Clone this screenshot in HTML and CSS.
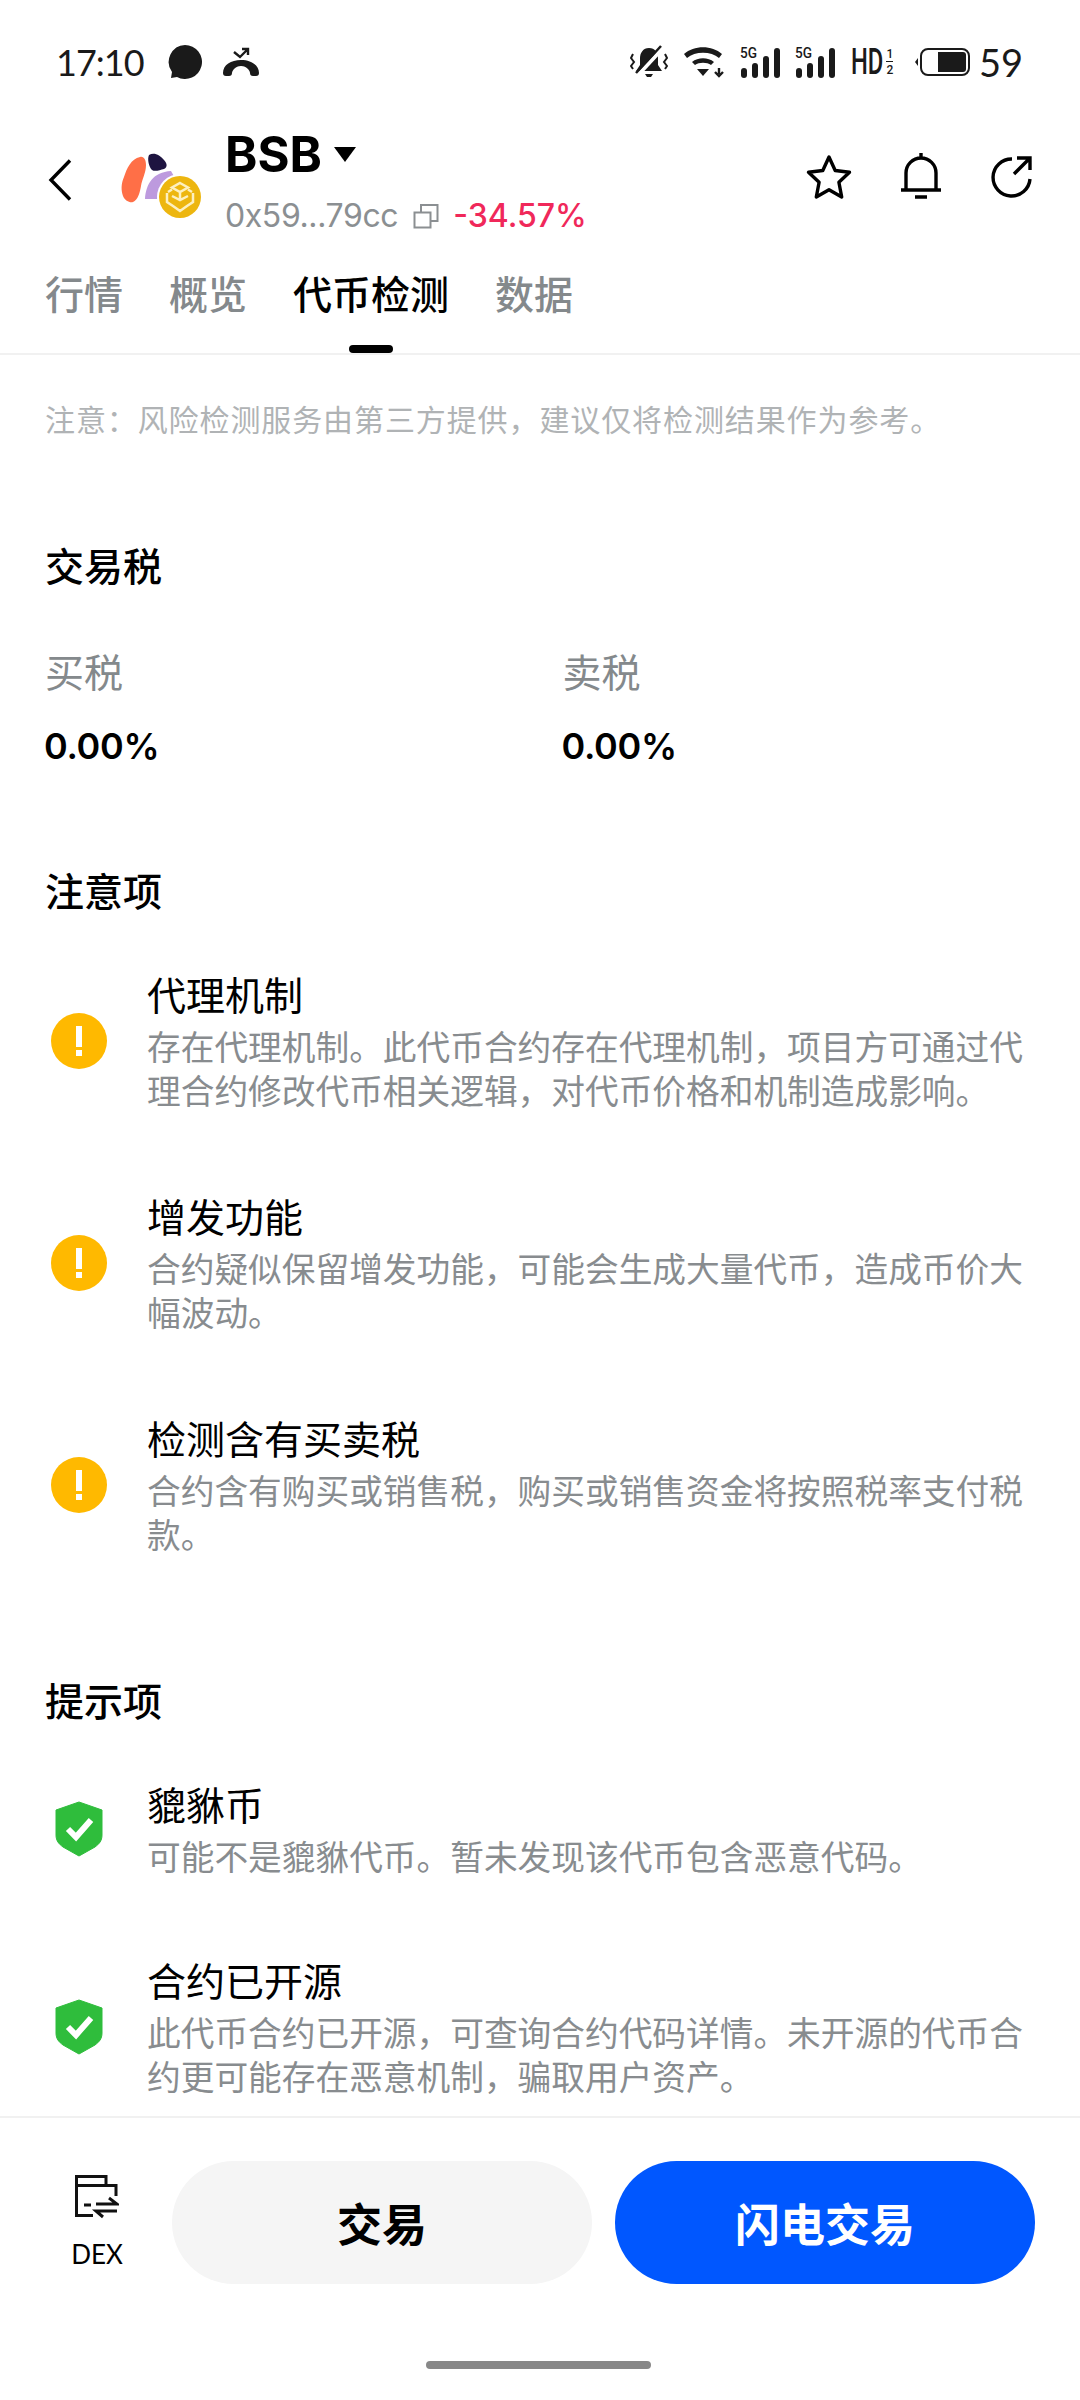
FILE: index.html
```html
<!DOCTYPE html>
<html lang="zh-CN">
<head>
    <meta charset="UTF-8">
    <meta name="viewport" content="width=device-width, initial-scale=1.0">
    <title>代币检测</title>
    <link rel="stylesheet" href="styles.css">
</head>
<body>
<div class="page">
    <div class="status">
        <span class="time">17:10</span>
        <svg class="st-bubble" width="36" height="36" viewBox="0 0 36 36"><path d="M18 1a17 17 0 1 1-8 32l-6 1 1-6A17 17 0 0 1 18 1z" fill="#1a1a1a"/></svg>
        <svg class="st-call" width="38" height="30" viewBox="0 0 38 30"><path d="M1 26c0-8 8-13 18-13s18 5 18 13c0 2-1 3-3 3h-3c-2 0-3-1-3-3 0-1-1-3-2-4-2-2-4-3-7-3s-5 1-7 3c-1 1-2 3-2 4 0 2-1 3-3 3H4c-2 0-3-1-3-3z" fill="#1a1a1a"/><path d="M12 5l6 5 8-8M20 2h6v6" fill="none" stroke="#1a1a1a" stroke-width="2.400"/></svg>
        <div class="status-right">
            <svg class="st-mute" width="38" height="34" viewBox="0 0 38 34"><path d="M19 3c-6 0-9 5-9 10v7l-4 6h26l-4-6v-7c0-5-3-10-9-10z" fill="#1a1a1a"/><path d="M15 29h8l-2 3h-4z" fill="#1a1a1a"/><path d="M9 29L33 3" stroke="#fff" stroke-width="4"/><path d="M6 28L31 1" stroke="#1a1a1a" stroke-width="2.500"/><path d="M3 9L1 13l3 4-3 4 2 3M35 9l2 4-3 4 3 4-2 3" fill="none" stroke="#1a1a1a" stroke-width="2"/></svg>
            <svg class="st-wifi" width="42" height="32" viewBox="0 0 42 32"><path d="M1 8c10-9 28-9 38 0l-3 4c-8-7-24-7-32 0z" fill="#1a1a1a"/><path d="M9 16c6-5 16-5 22 0l-3 3c-4-3-12-3-16 0z" fill="#1a1a1a"/><path d="M14 23h12l-6 7z" fill="#1a1a1a"/><path d="M36 22v6M32 26l4 4 4-4" fill="none" stroke="#1a1a1a" stroke-width="2.400"/></svg>
            <svg class="st-sig" width="40" height="32" viewBox="0 0 40 32"><text class="st-5g" x="0" y="12" textLength="17" lengthAdjust="spacingAndGlyphs">5G</text><rect x="1" y="22" width="6" height="10" rx="3" fill="#1a1a1a"/><rect x="12" y="17" width="6" height="15" rx="3" fill="#1a1a1a"/><rect x="23" y="10" width="6" height="22" rx="3" fill="#1a1a1a"/><rect x="34" y="2" width="6" height="30" rx="3" fill="#1a1a1a"/></svg>
            <svg class="st-sig" width="40" height="32" viewBox="0 0 40 32"><text class="st-5g" x="0" y="12" textLength="17" lengthAdjust="spacingAndGlyphs">5G</text><rect x="1" y="22" width="6" height="10" rx="3" fill="#1a1a1a"/><rect x="12" y="17" width="6" height="15" rx="3" fill="#1a1a1a"/><rect x="23" y="10" width="6" height="22" rx="3" fill="#1a1a1a"/><rect x="34" y="2" width="6" height="30" rx="3" fill="#1a1a1a"/></svg>
            <div class="st-hd">
                <span class="hd-txt">HD</span>
                <span class="hd-frac"><span class="hd-num">1</span><span class="hd-num">2</span></span>
            </div>
            <svg class="st-batt" width="56" height="28" viewBox="0 0 56 28"><path d="M3 10l-3 4 3 4z" fill="#1a1a1a"/><rect x="6" y="1" width="48" height="26" rx="7" fill="none" stroke="#1a1a1a" stroke-width="2"/><path d="M23 4h25a3 3 0 0 1 3 3v14a3 3 0 0 1-3 3H23z" fill="#1a1a1a"/></svg>
            <span class="batt-num">59</span>
        </div>
    </div>

    <div class="header">
        <svg class="back" width="24" height="42" viewBox="0 0 24 42"><path d="M22 1.500L3 21l19 19.500" fill="none" stroke="#000" stroke-width="3.400"/></svg>
        <svg class="logo" width="82" height="70" viewBox="0 0 82 70">
            <path d="M19 7c4-1 6 3 6 8 0 8-4 14-5 21-1 6-3 14-8 16-3 1-8-1-10-6C0 40 0 34 3 27 6 18 10 9 19 7z" fill="#ff6f47"/>
            <path d="M28 5c5-3 11 0 15 5 3 3 4 7 0 9-4 1-9 3-12 1-3-3-5-11-3-15z" fill="#1e1440"/>
            <path d="M24 49C25 34 32 22 50 21l4 7-8 7-10 14z" fill="#bd9ade"/>
            <circle cx="59" cy="47" r="23" fill="#fff"/>
            <circle cx="59" cy="47" r="21" fill="#edb60f"/>
            <path d="M59 33l8 4.500-8 4.500-8-4.500zM47 42l4-2.500M71 42l-4-2.500M46 43v9l6 4M72 43v9l-6 4M59 42v7M51 46l8 4 8-4M52 56l7 5 7-5" fill="none" stroke="#fdf0c0" stroke-width="2.500"/>
        </svg>
        <div class="token">
            <div class="token-name">BSB <svg class="caret" width="22" height="15" viewBox="0 0 22 15"><path d="M0 0h22L11 15z" fill="#000"/></svg></div>
            <div class="token-sub">
                <span class="addr">0x59...79cc</span>
                <svg class="copy" width="26" height="26" viewBox="0 0 26 26"><path d="M1.500 9.500h16v15h-16z M8 9V2h16.500v16H18" fill="none" stroke="#8b8f92" stroke-width="2"/></svg>
                <span class="pct">-34.57%</span>
            </div>
        </div>
        <div class="header-icons">
            <svg width="46" height="46" viewBox="0 0 46 46"><path d="M23 3l6.200 13.500 14.300 1.700-10.600 10 2.800 14.800L23 35.700 10.300 43l2.800-14.800-10.600-10 14.300-1.700z" fill="none" stroke="#000" stroke-width="3.400" stroke-linejoin="round"/></svg>
            <svg width="40" height="48" viewBox="0 0 40 48"><path d="M20 0v5M5 36V20a15 15 0 0 1 30 0v16M0 37h40M14 44h12" fill="none" stroke="#000" stroke-width="3.400"/></svg>
            <svg width="42" height="44" viewBox="0 0 42 44"><path d="M22 4A18.500 18.500 0 1 0 40 24" fill="none" stroke="#000" stroke-width="3.400"/><path d="M24 19L39 4M27 3h13v12" fill="none" stroke="#000" stroke-width="3.400"/></svg>
        </div>
    </div>

    <div class="tabs">
        <span class="tab">行情</span>
        <span class="tab">概览</span>
        <span class="tab active">代币检测</span>
        <span class="tab">数据</span>
    </div>

    <div class="content">
        <p class="notice">注意：风险检测服务由第三方提供，建议仅将检测结果作为参考。</p>

        <h2 class="sec-title">交易税</h2>
        <div class="tax-row">
            <div class="tax-col">
                <div class="tax-label">买税</div>
                <div class="tax-val">0.00%</div>
            </div>
            <div class="tax-col">
                <div class="tax-label">卖税</div>
                <div class="tax-val">0.00%</div>
            </div>
        </div>

        <h2 class="sec-title">注意项</h2>
        <div class="item warn">
            <svg class="item-icon" width="56" height="56" viewBox="0 0 56 56"><circle cx="28" cy="28" r="28" fill="#ffb900"/><path d="M25 13h6v21h-6zM25 37h6v6h-6z" fill="#fff"/></svg>
            <div class="item-text">
                <div class="item-title">代理机制</div>
                <div class="item-desc">存在代理机制。此代币合约存在代理机制，项目方可通过代理合约修改代币相关逻辑，对代币价格和机制造成影响。</div>
            </div>
        </div>
        <div class="item warn">
            <svg class="item-icon" width="56" height="56" viewBox="0 0 56 56"><circle cx="28" cy="28" r="28" fill="#ffb900"/><path d="M25 13h6v21h-6zM25 37h6v6h-6z" fill="#fff"/></svg>
            <div class="item-text">
                <div class="item-title">增发功能</div>
                <div class="item-desc">合约疑似保留增发功能，可能会生成大量代币，造成币价大幅波动。</div>
            </div>
        </div>
        <div class="item warn">
            <svg class="item-icon" width="56" height="56" viewBox="0 0 56 56"><circle cx="28" cy="28" r="28" fill="#ffb900"/><path d="M25 13h6v21h-6zM25 37h6v6h-6z" fill="#fff"/></svg>
            <div class="item-text">
                <div class="item-title">检测含有买卖税</div>
                <div class="item-desc">合约含有购买或销售税，购买或销售资金将按照税率支付税款。</div>
            </div>
        </div>

        <h2 class="sec-title tips">提示项</h2>
        <div class="item ok">
            <svg class="item-icon" width="50" height="56" viewBox="0 0 50 56"><path d="M25 1l23 8v25c0 6-3 9-7 12L25 55 9 46c-4-3-7-6-7-12V9z" fill="#2fbd3c" stroke="#2fbd3c" stroke-linejoin="round"/><path d="M14 28l8 8 15-17" fill="none" stroke="#fff" stroke-width="6"/></svg>
            <div class="item-text">
                <div class="item-title">貔貅币</div>
                <div class="item-desc">可能不是貔貅代币。暂未发现该代币包含恶意代码。</div>
            </div>
        </div>
        <div class="item ok">
            <svg class="item-icon" width="50" height="56" viewBox="0 0 50 56"><path d="M25 1l23 8v25c0 6-3 9-7 12L25 55 9 46c-4-3-7-6-7-12V9z" fill="#2fbd3c" stroke="#2fbd3c" stroke-linejoin="round"/><path d="M14 28l8 8 15-17" fill="none" stroke="#fff" stroke-width="6"/></svg>
            <div class="item-text">
                <div class="item-title">合约已开源</div>
                <div class="item-desc">此代币合约已开源，可查询合约代码详情。未开源的代币合约更可能存在恶意机制，骗取用户资产。</div>
            </div>
        </div>
    </div>

    <div class="footer">
        <div class="footer-row">
            <div class="dex">
                <svg width="44" height="44" viewBox="0 0 44 44"><path d="M18 40.500H1.500V1.500H31v9h10V21M1.500 10.500H31M9 30h7" fill="none" stroke="#111" stroke-width="3"/><path d="M21 29h21l-8-6M42 36H21l7 6" fill="none" stroke="#111" stroke-width="3"/></svg>
                <span class="dex-label">DEX</span>
            </div>
            <button class="btn btn-trade">交易</button>
            <button class="btn btn-flash">闪电交易</button>
        </div>
        <div class="home-bar"></div>
    </div>
</div>
</body>
</html>
```

FILE: styles.css
```css
* {
    box-sizing: border-box;
    margin: 0;
    padding: 0;
}
body {
    font-family: 'Inter', 'Noto Sans CJK SC', sans-serif;
    background-color: #fff;
    color: #000;
}
.page {
    width: 1080px;
    height: 2400px;
    display: flex;
    flex-direction: column;
    overflow: hidden;
}

/* status bar */
.status {
    height: 124px;
    flex: none;
    display: flex;
    align-items: center;
    padding: 0 57px 0 56px;
    color: #1a1a1a;
}
.time {
    font-family: 'Lato', sans-serif;
    font-size: 36px;
    letter-spacing: -1px;
    width: 111px;
}
.st-call {
    margin-left: 19px;
}
.status-right {
    margin-left: auto;
    display: flex;
    align-items: center;
}
.st-wifi {
    margin-left: 15px;
}
.st-sig {
    margin-left: 15px;
}
.st-hd {
    margin-left: 16px;
    width: 46px;
    display: flex;
    align-items: center;
}
.hd-txt {
    width: 34px;
    font-family: 'Roboto', sans-serif;
    font-size: 36px;
    font-weight: 500;
    transform: scaleX(0.66);
    transform-origin: left center;
}
.hd-frac {
    display: flex;
    flex-direction: column;
    align-items: center;
    width: 10px;
    gap: 1px;
}
.hd-num {
    font-family: 'Roboto', sans-serif;
    font-size: 12px;
    font-weight: 500;
    line-height: 14px;
}
.hd-num:first-child {
    border-bottom: 1px solid #1a1a1a;
}
.st-batt {
    margin-left: 18px;
}
.batt-num {
    font-family: 'Lato', sans-serif;
    font-size: 38px;
    margin-left: 8px;
}
.st-5g {
    font-family: 'Roboto', sans-serif;
    font-size: 14px;
    font-weight: 500;
    fill: #1a1a1a;
}

/* header */
.header {
    height: 112px;
    flex: none;
    display: flex;
    align-items: center;
    padding: 0 48px 0 48px;
}
.logo {
    margin-left: 49px;
    margin-top: 10px;
}
.token {
    margin-left: 22px;
}
.token-name {
    font-size: 49px;
    font-weight: 700;
    line-height: 60px;
    display: flex;
    align-items: center;
}
.caret {
    margin-left: 12px;
}
.token-sub {
    display: flex;
    align-items: center;
    font-size: 32px;
    line-height: 40px;
    margin-top: 11px;
}
.addr {
    color: #8b8f92;
    letter-spacing: -0.4px;
}
.copy {
    margin-left: 15px;
}
.pct {
    color: #f0285a;
    font-weight: 500;
    margin-left: 14px;
}
.header-icons {
    margin-left: auto;
    margin-bottom: 6px;
    display: flex;
    align-items: center;
    gap: 49px;
}

/* tabs */
.tabs {
    height: 119px;
    flex: none;
    display: flex;
    gap: 46px;
    padding: 34px 45px 0;
    border-bottom: 2px solid #f1f1f1;
}
.tab {
    position: relative;
    font-size: 39px;
    font-weight: 500;
    line-height: 50px;
    color: #84898c;
}
.tab.active {
    color: #000;
}
.tab.active::after {
    content: "";
    position: absolute;
    left: 56px;
    bottom: 0;
    width: 44px;
    height: 8px;
    border-radius: 4px;
    background-color: #000;
}

/* content */
.content {
    flex: 1;
    overflow: hidden;
    padding: 43px 0 0 45px;
}
.notice {
    font-size: 30px;
    line-height: 44px;
    color: #b0b3b5;
    letter-spacing: 0.9px;
    margin-bottom: 100px;
}
.sec-title {
    font-size: 39px;
    font-weight: 500;
    line-height: 50px;
    margin-top: 99px;
    margin-bottom: 56px;
}
.notice + .sec-title {
    margin-top: 0;
}
.sec-title.tips {
    margin-top: 119px;
}
.tax-row {
    display: flex;
}
.tax-col {
    width: 518px;
}
.tax-label {
    font-size: 39px;
    line-height: 50px;
    color: #84898c;
}
.tax-val {
    font-size: 36px;
    font-weight: 600;
    line-height: 44px;
    margin-top: 26px;
    margin-left: -1px;
    letter-spacing: -0.3px;
}
.item {
    display: flex;
    align-items: center;
    padding-right: 45px;
    margin-bottom: 81px;
}
.item.ok {
    margin-bottom: 79px;
}
.item-icon {
    flex: none;
    margin-left: 6px;
    margin-bottom: 5px;
}
.item-text {
    margin-left: 40px;
}
.item.ok .item-icon {
    margin-left: 9px;
}
.item.ok .item-text {
    margin-left: 43px;
}
.item-title {
    font-size: 39px;
    line-height: 46px;
}
.item-desc {
    font-size: 33.700px;
    line-height: 44px;
    color: #888c8f;
    margin-top: 7px;
}

/* footer */
.footer {
    height: 284px;
    flex: none;
    border-top: 2px solid #f1f1f1;
    padding-top: 43px;
}
.footer-row {
    display: flex;
    align-items: center;
    gap: 23px;
    padding: 0 45px;
}
.dex {
    width: 104px;
    display: flex;
    flex-direction: column;
    align-items: center;
}
.dex-label {
    font-family: 'Lato', sans-serif;
    font-size: 26px;
    line-height: 34px;
    margin-top: 18px;
}
.btn {
    flex: 1;
    height: 123px;
    border: none;
    border-radius: 62px;
    font-family: 'Inter', 'Noto Sans CJK SC', sans-serif;
    font-size: 45px;
    font-weight: 700;
}
.btn-trade {
    background-color: #f5f5f5;
    color: #000;
}
.btn-flash {
    background-color: #0057ff;
    color: #fff;
}
.home-bar {
    width: 225px;
    height: 8px;
    margin: 77px 0 0 426px;
    border-radius: 4px;
    background-color: #888;
}
```
